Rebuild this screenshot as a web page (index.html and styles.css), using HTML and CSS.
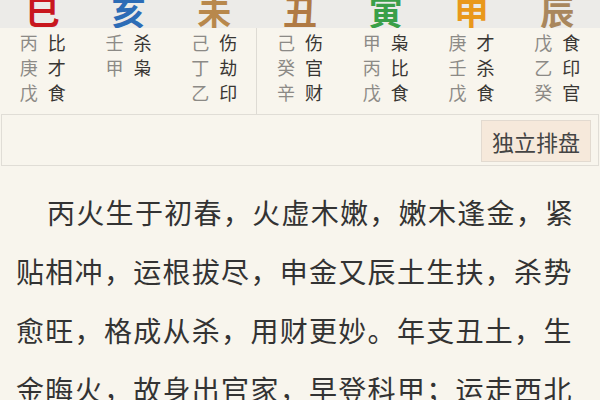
FILE: index.html
```html
<!DOCTYPE html>
<html lang="zh">
<head>
<meta charset="utf-8">
<link rel="stylesheet" href="styles.css">
</head>
<body>
<div class="chart">
  <div class="pillar">
    <div class="branch c-red">巳</div>
    <div class="stems">
      <div class="pair"><span class="stem">丙</span><span class="god">比</span></div>
      <div class="pair"><span class="stem">庚</span><span class="god">才</span></div>
      <div class="pair"><span class="stem">戊</span><span class="god">食</span></div>
    </div>
  </div>
  <div class="pillar">
    <div class="branch c-blue">亥</div>
    <div class="stems">
      <div class="pair"><span class="stem">壬</span><span class="god">杀</span></div>
      <div class="pair"><span class="stem">甲</span><span class="god">枭</span></div>
    </div>
  </div>
  <div class="pillar split">
    <div class="branch c-tan">未</div>
    <div class="stems">
      <div class="pair"><span class="stem">己</span><span class="god">伤</span></div>
      <div class="pair"><span class="stem">丁</span><span class="god">劫</span></div>
      <div class="pair"><span class="stem">乙</span><span class="god">印</span></div>
    </div>
  </div>
  <div class="pillar">
    <div class="branch c-brown">丑</div>
    <div class="stems">
      <div class="pair"><span class="stem">己</span><span class="god">伤</span></div>
      <div class="pair"><span class="stem">癸</span><span class="god">官</span></div>
      <div class="pair"><span class="stem">辛</span><span class="god">财</span></div>
    </div>
  </div>
  <div class="pillar">
    <div class="branch c-green">寅</div>
    <div class="stems">
      <div class="pair"><span class="stem">甲</span><span class="god">枭</span></div>
      <div class="pair"><span class="stem">丙</span><span class="god">比</span></div>
      <div class="pair"><span class="stem">戊</span><span class="god">食</span></div>
    </div>
  </div>
  <div class="pillar">
    <div class="branch c-orange">申</div>
    <div class="stems">
      <div class="pair"><span class="stem">庚</span><span class="god">才</span></div>
      <div class="pair"><span class="stem">壬</span><span class="god">杀</span></div>
      <div class="pair"><span class="stem">戊</span><span class="god">食</span></div>
    </div>
  </div>
  <div class="pillar">
    <div class="branch c-earth">辰</div>
    <div class="stems">
      <div class="pair"><span class="stem">戊</span><span class="god">食</span></div>
      <div class="pair"><span class="stem">乙</span><span class="god">印</span></div>
      <div class="pair"><span class="stem">癸</span><span class="god">官</span></div>
    </div>
  </div>
</div>
<div class="toolbar">
  <button class="btn">独立排盘</button>
</div>
<p class="text">丙火生于初春，火虚木嫩，嫩木逢金，紧贴相冲，运根拔尽，申金又辰土生扶，杀势愈旺，格成从杀，用财更妙。年支丑土，生金晦火，故身出官家，早登科甲；运走西北金水之地，仕至观察。</p>
</body>
</html>
```
FILE: styles.css
```css
html, body {
  margin: 0;
  padding: 0;
  background: #f8f5ed;
  font-family: "Noto Sans CJK SC", "Noto Sans", sans-serif;
  overflow: hidden;
}

.chart {
  display: grid;
  grid-template-columns: repeat(7, 1fr);
}

.pillar {
  display: flex;
  flex-direction: column;
}

.pillar.split {
  box-shadow: inset -1px 0 0 #dedbd4;
}

.branch {
  height: 28px;
  overflow: hidden;
  background: #ecebe8;
  text-align: center;
  font-size: 34px;
  font-weight: bold;
  line-height: 34px;
}

.branch::first-line {
  line-height: 34px;
}

.pillar .branch {
  padding-top: 0;
}

.branch {
  display: flex;
  justify-content: center;
  align-items: flex-end;
}

.c-red { color: #c8171e; }
.c-blue { color: #2c6cb6; }
.c-tan { color: #b8884c; }
.c-brown { color: #b07a44; }
.c-green { color: #3a9f48; }
.c-orange { color: #e9981b; }
.c-earth { color: #a9875d; }

.stems {
  height: 86px;
  padding-top: 2px;
  box-sizing: border-box;
  display: flex;
  flex-direction: column;
  align-items: center;
}

.pair {
  display: flex;
  gap: 10px;
  font-size: 18px;
  line-height: 25px;
}

.stem { color: #8c8a86; }
.god { color: #383633; }

.toolbar {
  margin: 0 1px;
  height: 50px;
  border: 1px solid #e0ddd6;
  display: flex;
  justify-content: flex-end;
  align-items: center;
  padding-right: 7px;
}

.btn {
  height: 42px;
  padding: 0 10px;
  margin-top: 2px;
  background: #f6e9db;
  border: 1px solid #e2dad0;
  border-radius: 0;
  color: #444;
  font-family: "Noto Sans CJK SC", sans-serif;
  font-size: 22px;
  line-height: 40px;
}

.text {
  margin: 17px 0 0;
  padding: 0 16px;
  font-size: 28px;
  letter-spacing: 1.3px;
  line-height: 59px;
  text-indent: 31px;
  color: #333;
}
```
